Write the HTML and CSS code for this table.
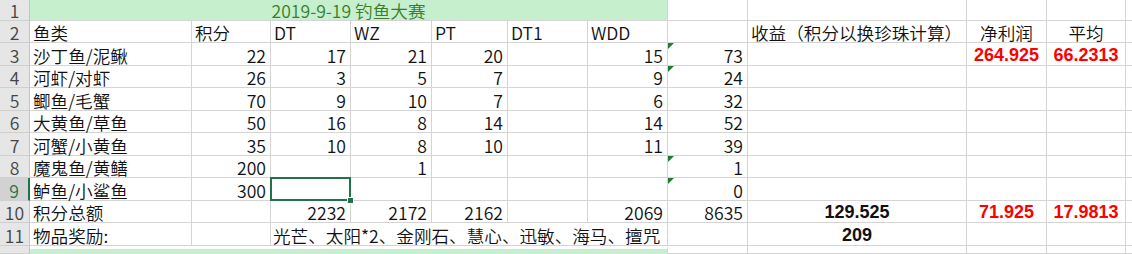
FILE: index.html
```html
<!DOCTYPE html>
<html lang="zh">
<head>
<meta charset="utf-8">
<title>钓鱼大赛</title>
<link rel="stylesheet" href="styles.css">
</head>
<body>
<div class="sheet">
  <!-- row 1 -->
  <div class="c hdr">1</div>
  <div class="c title">2019-9-19 钓鱼大赛</div>
  <div class="c"></div><div class="c"></div><div class="c"></div><div class="c"></div><div class="c edge"></div>
  <!-- row 2 -->
  <div class="c hdr">2</div>
  <div class="c">鱼类</div><div class="c">积分</div><div class="c">DT</div><div class="c">WZ</div><div class="c">PT</div><div class="c">DT1</div><div class="c">WDD</div><div class="c"></div>
  <div class="c">收益（积分以换珍珠计算）</div><div class="c ctr">净利润</div><div class="c ctr">平均</div><div class="c edge"></div>
  <!-- row 3 -->
  <div class="c hdr">3</div>
  <div class="c">沙丁鱼/泥鳅</div><div class="c r">22</div><div class="c r">17</div><div class="c r">21</div><div class="c r">20</div><div class="c"></div><div class="c r">15</div><div class="c r tri">73</div>
  <div class="c"></div><div class="c ctr num red">264.925</div><div class="c ctr num red">66.2313</div><div class="c edge"></div>
  <!-- row 4 -->
  <div class="c hdr">4</div>
  <div class="c">河虾/对虾</div><div class="c r">26</div><div class="c r">3</div><div class="c r">5</div><div class="c r">7</div><div class="c"></div><div class="c r">9</div><div class="c r tri">24</div>
  <div class="c"></div><div class="c"></div><div class="c"></div><div class="c edge"></div>
  <!-- row 5 -->
  <div class="c hdr">5</div>
  <div class="c">鲫鱼/毛蟹</div><div class="c r">70</div><div class="c r">9</div><div class="c r">10</div><div class="c r">7</div><div class="c"></div><div class="c r">6</div><div class="c r">32</div>
  <div class="c"></div><div class="c"></div><div class="c"></div><div class="c edge"></div>
  <!-- row 6 -->
  <div class="c hdr">6</div>
  <div class="c">大黄鱼/草鱼</div><div class="c r">50</div><div class="c r">16</div><div class="c r">8</div><div class="c r">14</div><div class="c"></div><div class="c r">14</div><div class="c r">52</div>
  <div class="c"></div><div class="c"></div><div class="c"></div><div class="c edge"></div>
  <!-- row 7 -->
  <div class="c hdr">7</div>
  <div class="c">河蟹/小黄鱼</div><div class="c r">35</div><div class="c r">10</div><div class="c r">8</div><div class="c r">10</div><div class="c"></div><div class="c r">11</div><div class="c r">39</div>
  <div class="c"></div><div class="c"></div><div class="c"></div><div class="c edge"></div>
  <!-- row 8 -->
  <div class="c hdr">8</div>
  <div class="c">魔鬼鱼/黄鳝</div><div class="c r">200</div><div class="c"></div><div class="c r">1</div><div class="c"></div><div class="c"></div><div class="c"></div><div class="c r tri">1</div>
  <div class="c"></div><div class="c"></div><div class="c"></div><div class="c edge"></div>
  <!-- row 9 -->
  <div class="c hdr hdr-sel">9</div>
  <div class="c">鲈鱼/小鲨鱼</div><div class="c r">300</div><div class="c sel"></div><div class="c"></div><div class="c"></div><div class="c"></div><div class="c"></div><div class="c r tri">0</div>
  <div class="c"></div><div class="c"></div><div class="c"></div><div class="c edge"></div>
  <!-- row 10 -->
  <div class="c hdr">10</div>
  <div class="c">积分总额</div><div class="c"></div><div class="c r">2232</div><div class="c r">2172</div><div class="c r">2162</div><div class="c"></div><div class="c r">2069</div><div class="c r">8635</div>
  <div class="c ctr num">129.525</div><div class="c ctr num red">71.925</div><div class="c ctr num red">17.9813</div><div class="c edge"></div>
  <!-- row 11 -->
  <div class="c hdr">11</div>
  <div class="c">物品奖励:</div><div class="c"></div><div class="c prizes">光芒、太阳*2、金刚石、慧心、迅敏、海马、擅咒</div><div class="c"></div>
  <div class="c ctr num">209</div><div class="c"></div><div class="c"></div><div class="c edge"></div>
  <!-- row 12 -->
  <div class="c hdr"></div>
  <div class="c band"></div>
  <div class="c"></div><div class="c"></div><div class="c"></div><div class="c"></div><div class="c edge"></div>
</div>
</body>
</html>
```

FILE: styles.css
```css
html, body {
  margin: 0;
  padding: 0;
  background: #ffffff;
}

body {
  font-family: "Noto Sans CJK SC", "Noto Sans", sans-serif;
  font-size: 17.6px;
  font-weight: 350;
  color: #111;
  overflow: hidden;
}

.sheet {
  display: grid;
  grid-template-columns: 30px 162px 79px 80px 81px 76px 80px 80px 80px 219px 80px 79px 6px;
  grid-template-rows: 21px 22px 23px 22px 23px 22px 23px 22px 23px 22px 23px 8px;
  width: 1132px;
  height: 254px;
  overflow: hidden;
}

.c {
  box-sizing: border-box;
  border-right: 1px solid #d4d4d4;
  border-bottom: 1px solid #d4d4d4;
  display: flex;
  align-items: flex-end;
  padding: 0 3px;
  white-space: nowrap;
  overflow: visible;
  line-height: 1;
  position: relative;
}

.edge {
  border-right: none;
}

.r {
  justify-content: flex-end;
  padding-right: 4px;
}

.ctr {
  justify-content: center;
}

.hdr {
  background: #e6e6e6;
  border-right: 1px solid #c4c4c4;
  border-bottom: 1px solid #cfcfcf;
  color: #444;
  justify-content: center;
  padding: 0;
}

.hdr-sel {
  background: #d2d2d2;
  color: #217346;
  border-right: 2px solid #217346;
}

.title {
  grid-column: span 7;
  background: #c6efce;
  color: #3a7d2a;
  justify-content: center;
}

.band {
  grid-column: span 7;
  background: #c6efce;
  border-bottom: none;
  border-top: 3px solid #ffffff;
}

.prizes {
  grid-column: span 5;
  padding-left: 2px;
}

.num {
  font-family: "Liberation Sans", Arial, sans-serif;
  font-weight: bold;
  font-size: 18px;
  padding-bottom: 1px;
}

.red {
  color: #ff0000;
}

.tri::before {
  content: "";
  position: absolute;
  left: 0;
  top: 0;
  width: 0;
  height: 0;
  border-top: 6px solid #1e7b34;
  border-right: 6px solid transparent;
}

.sel::after {
  content: "";
  position: absolute;
  left: -1px;
  top: -1px;
  right: -1px;
  bottom: -1px;
  border: 2px solid #217346;
}

.sel::before {
  content: "";
  position: absolute;
  right: -4px;
  bottom: -4px;
  width: 5px;
  height: 5px;
  background: #217346;
  border: 1px solid #ffffff;
  z-index: 2;
}
```
